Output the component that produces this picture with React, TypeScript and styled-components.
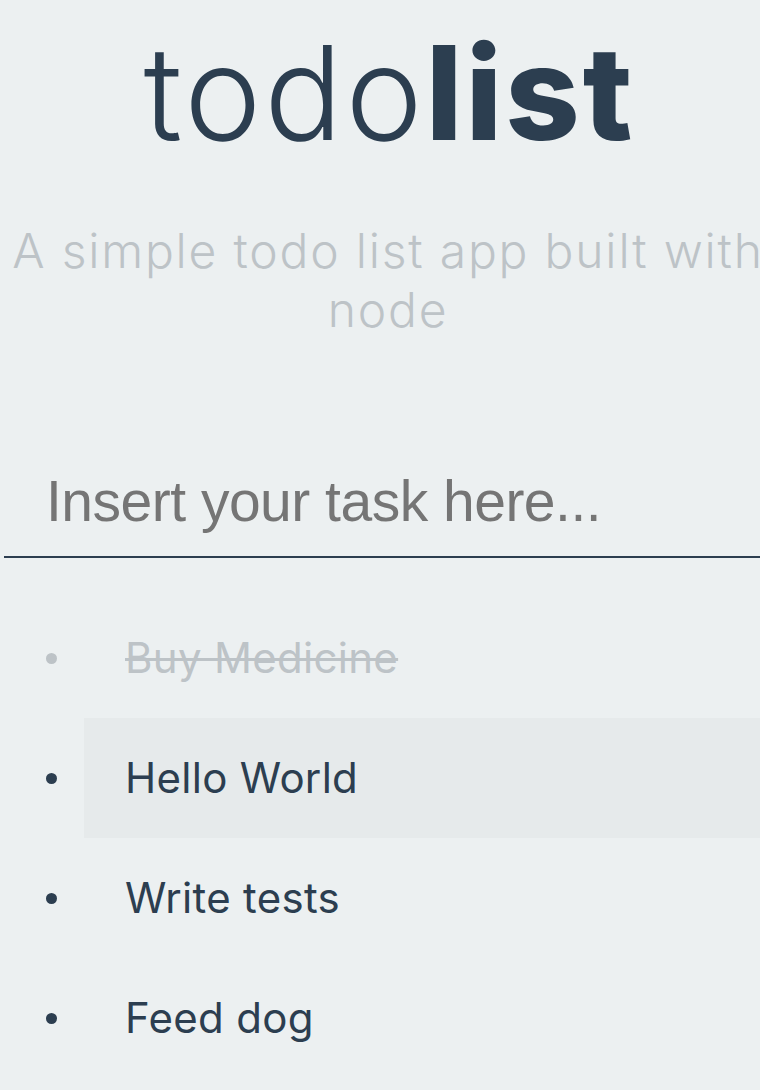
import React from "react";
import styled, { createGlobalStyle } from "styled-components";

const GlobalStyle = createGlobalStyle`
  html, body {
    margin: 0;
    padding: 0;
    background: #ecf0f1;
    overflow-x: hidden;
  }
  body {
    font-family: "Inter", "Noto Sans", sans-serif;
  }
`;

const Page = styled.main`
  margin-left: 4px;
  width: 768px;
  display: flex;
  flex-direction: column;
`;

const Title = styled.h1`
  margin: 28px 0 0;
  font-size: 130px;
  line-height: 130px;
  text-align: center;
  color: #2c3e50;
  font-weight: 300;
  letter-spacing: 3px;
  text-indent: 3px;
`;

const Bold = styled.span`
  font-weight: 800;
`;

const Subtitle = styled.p`
  margin: 63px 0 0;
  padding: 0 8px;
  font-size: 48px;
  line-height: 59px;
  font-weight: 300;
  text-align: center;
  color: #bdc3c7;
  white-space: nowrap;
  letter-spacing: 1.8px;
`;

const TaskInput = styled.input`
  margin-top: 109px;
  box-sizing: border-box;
  width: 100%;
  padding: 20px 0 22px 42px;
  border: none;
  border-bottom: 2px solid #2c3e50;
  background: transparent;
  font-family: "Liberation Sans", Arial, sans-serif;
  font-size: 57px;
  letter-spacing: -0.5px;
  color: #2c3e50;
  outline: none;
  &::placeholder {
    color: #757575;
  }
`;

const List = styled.ul`
  list-style: none;
  margin: 40px 0 0 -4px;
  padding: 0;
  display: flex;
  flex-direction: column;
`;

const Row = styled.li`
  display: flex;
  align-items: stretch;
  height: 120px;
`;

const BulletCell = styled.div<{ $done?: boolean }>`
  width: 84px;
  flex: none;
  display: flex;
  align-items: center;
  &::before {
    content: "";
    width: 11px;
    height: 11px;
    margin-left: 46px;
    border-radius: 50%;
    background: ${(p) => (p.$done ? "#bdc3c7" : "#2c3e50")};
  }
`;

const Item = styled.div<{ $done?: boolean; $active?: boolean }>`
  flex: 1;
  display: flex;
  align-items: center;
  padding-left: 41px;
  padding-bottom: 2px;
  font-size: 42px;
  font-weight: 400;
  letter-spacing: 0.3px;
  color: ${(p) => (p.$done ? "#bdc3c7" : "#2c3e50")};
  text-decoration: ${(p) => (p.$done ? "line-through" : "none")};
  text-decoration-thickness: 3px;
  background: ${(p) => (p.$active ? "#e6eaeb" : "transparent")};
`;

const tasks = [
  { text: "Buy Medicine", done: true },
  { text: "Hello World", active: true },
  { text: "Write tests" },
  { text: "Feed dog" },
];

export default function App() {
  return (
    <>
      <GlobalStyle />
      <Page>
        <Title>
          todo<Bold>list</Bold>
        </Title>
        <Subtitle>
          A simple todo list app built with
          <br />
          node
        </Subtitle>
        <TaskInput placeholder="Insert your task here..." />
        <List>
          {tasks.map((t) => (
            <Row key={t.text}>
              <BulletCell $done={t.done} />
              <Item $done={t.done} $active={t.active}>
                {t.text}
              </Item>
            </Row>
          ))}
        </List>
      </Page>
    </>
  );
}
